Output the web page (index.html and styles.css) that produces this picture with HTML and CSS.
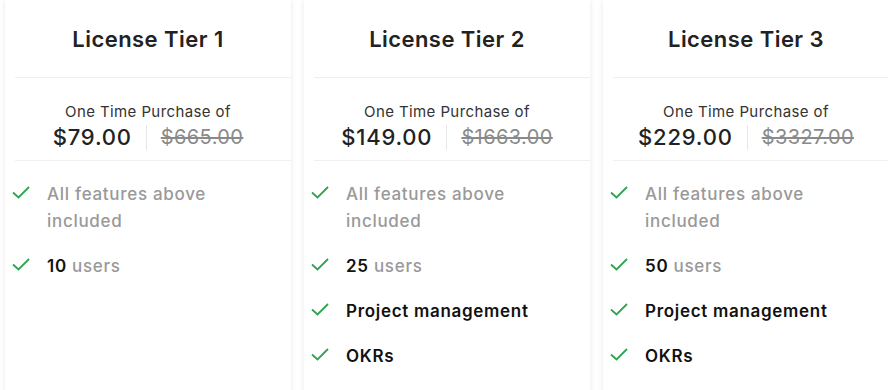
FILE: index.html
```html
<!DOCTYPE html>
<html lang="en">
<head>
<meta charset="utf-8">
<title>License Tiers</title>
<link rel="stylesheet" href="styles.css">
</head>
<body>
<div class="tiers">
  <section class="card">
    <header class="card-head"><h2 class="title">License Tier 1</h2></header>
    <div class="price-block">
      <div class="price-label">One Time Purchase of</div>
      <div class="price-row">
        <span class="price">$79.00</span>
        <span class="price-sep"></span>
        <span class="price-old">$665.00</span>
      </div>
    </div>
    <ul class="features">
      <li class="feature"><svg class="check" viewBox="0 0 18 13"><path d="M1 6.5 L6.5 11.5 L17 1"/></svg><span class="ftext muted">All features above included</span></li>
      <li class="feature"><svg class="check" viewBox="0 0 18 13"><path d="M1 6.5 L6.5 11.5 L17 1"/></svg><span class="ftext"><b>10</b> <span class="muted">users</span></span></li>
    </ul>
  </section>
  <section class="card">
    <header class="card-head"><h2 class="title">License Tier 2</h2></header>
    <div class="price-block">
      <div class="price-label">One Time Purchase of</div>
      <div class="price-row">
        <span class="price">$149.00</span>
        <span class="price-sep"></span>
        <span class="price-old">$1663.00</span>
      </div>
    </div>
    <ul class="features">
      <li class="feature"><svg class="check" viewBox="0 0 18 13"><path d="M1 6.5 L6.5 11.5 L17 1"/></svg><span class="ftext muted">All features above included</span></li>
      <li class="feature"><svg class="check" viewBox="0 0 18 13"><path d="M1 6.5 L6.5 11.5 L17 1"/></svg><span class="ftext"><b>25</b> <span class="muted">users</span></span></li>
      <li class="feature"><svg class="check" viewBox="0 0 18 13"><path d="M1 6.5 L6.5 11.5 L17 1"/></svg><span class="ftext"><b>Project management</b></span></li>
      <li class="feature"><svg class="check" viewBox="0 0 18 13"><path d="M1 6.5 L6.5 11.5 L17 1"/></svg><span class="ftext"><b>OKRs</b></span></li>
    </ul>
  </section>
  <section class="card">
    <header class="card-head"><h2 class="title">License Tier 3</h2></header>
    <div class="price-block">
      <div class="price-label">One Time Purchase of</div>
      <div class="price-row">
        <span class="price">$229.00</span>
        <span class="price-sep"></span>
        <span class="price-old">$3327.00</span>
      </div>
    </div>
    <ul class="features">
      <li class="feature"><svg class="check" viewBox="0 0 18 13"><path d="M1 6.5 L6.5 11.5 L17 1"/></svg><span class="ftext muted">All features above included</span></li>
      <li class="feature"><svg class="check" viewBox="0 0 18 13"><path d="M1 6.5 L6.5 11.5 L17 1"/></svg><span class="ftext"><b>50</b> <span class="muted">users</span></span></li>
      <li class="feature"><svg class="check" viewBox="0 0 18 13"><path d="M1 6.5 L6.5 11.5 L17 1"/></svg><span class="ftext"><b>Project management</b></span></li>
      <li class="feature"><svg class="check" viewBox="0 0 18 13"><path d="M1 6.5 L6.5 11.5 L17 1"/></svg><span class="ftext"><b>OKRs</b></span></li>
    </ul>
  </section>
</div>
</body>
</html>
```

FILE: styles.css
```css
html, body {
  margin: 0;
  padding: 0;
  background: #ffffff;
  overflow: hidden;
}
body {
  font-family: "Inter", "Open Sans", sans-serif;
  color: #222;
}
.tiers {
  display: flex;
  gap: 13px;
  padding-left: 5px;
  height: 400px;
}
.card {
  flex: 0 0 286px;
  background: #fff;
  box-shadow: 0 0 6px rgba(0, 0, 0, 0.09);
  display: flex;
  flex-direction: column;
}
.card-head {
  height: 77px;
  display: flex;
  align-items: center;
  justify-content: center;
  border-bottom: 1px solid #efefef;
  margin-left: 10px;
  padding-right: 10px;
}
.title {
  margin: 0;
  font-size: 22px;
  font-weight: 600;
  color: #222;
  letter-spacing: 0.45px;
}
.price-block {
  margin-left: 10px;
  padding: 24px 10px 8px 0;
  border-bottom: 1px solid #efefef;
  text-align: center;
}
.price-label {
  font-size: 15px;
  line-height: 20px;
  font-weight: 400;
  color: #333;
  letter-spacing: 0.4px;
}
.price-row {
  display: flex;
  justify-content: center;
  align-items: center;
  gap: 14px;
  height: 30px;
}
.price {
  font-size: 22px;
  font-weight: 500;
  color: #222;
  letter-spacing: 0.8px;
}
.price-old {
  font-size: 20px;
  font-weight: 400;
  color: #8a8a8a;
  text-decoration: line-through;
  letter-spacing: 0.4px;
}
.price-sep {
  width: 1px;
  height: 25px;
  background: #e6e6e6;
}
.features {
  list-style: none;
  margin: 0;
  padding: 20px 0 0 7px;
}
.feature {
  display: flex;
  align-items: flex-start;
  margin-bottom: 18px;
}
.check {
  width: 18px;
  height: 13px;
  margin-top: 5px;
  margin-right: 17px;
  flex: 0 0 auto;
  fill: none;
  stroke: #2ea44f;
  stroke-width: 1.8;
}
.ftext {
  font-size: 17px;
  line-height: 27px;
  max-width: 205px;
  color: #111;
  font-weight: 500;
  letter-spacing: 0.7px;
}
.ftext b {
  font-weight: 600;
  color: #111;
}
.muted {
  color: #999;
  font-weight: 500;
}
```
